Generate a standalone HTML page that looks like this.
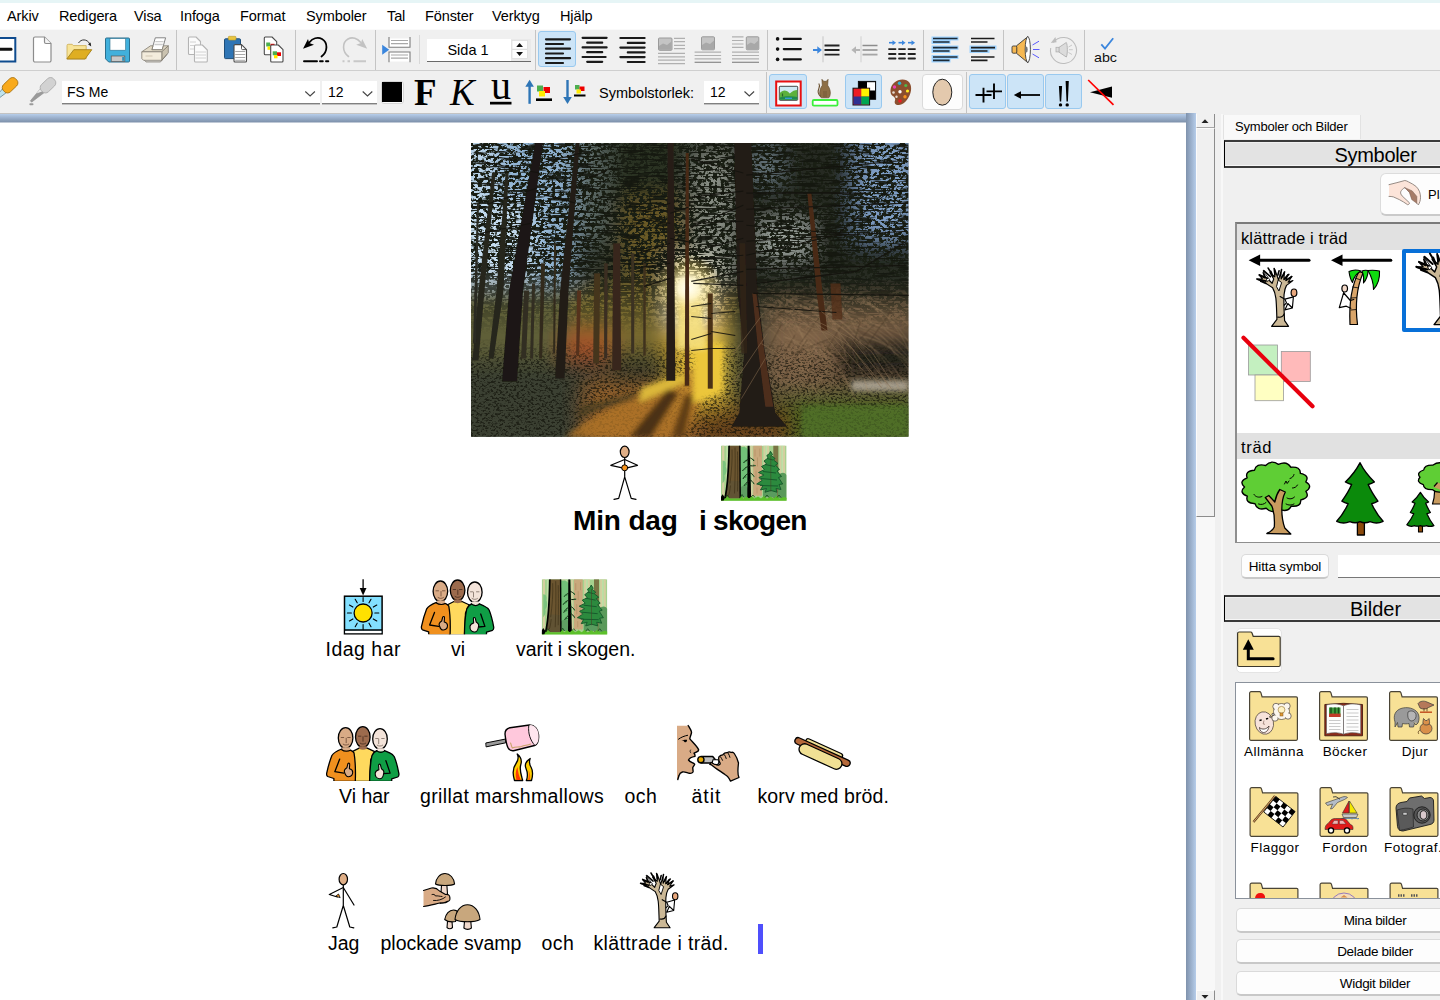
<!DOCTYPE html>
<html lang="sv">
<head>
<meta charset="utf-8">
<title>Min dag i skogen</title>
<style>
*{box-sizing:border-box;margin:0;padding:0}
html,body{width:1440px;height:1000px;overflow:hidden;background:#f0f0f0;font-family:"Liberation Sans",sans-serif;color:#000}
#app{position:relative;width:1440px;height:1000px;overflow:hidden;background:#f0f0f0}
.abs{position:absolute}
svg{position:absolute;overflow:visible}
/* menu */
#topstrip{left:0;top:0;width:1440px;height:3px;background:#e6f5f6}
#menubar{left:0;top:3px;width:1440px;height:26px;background:#fff}
.mi{position:absolute;top:5px;font-size:14.5px;line-height:16px;color:#000;white-space:nowrap;letter-spacing:-0.1px}
/* toolbars */
#tb1{left:0;top:29px;width:1440px;height:42px;background:#f0f0f0;border-top:1px solid #fafafa}
#tb2{left:0;top:70px;width:1440px;height:44px;background:#f0f0f0;border-top:1px solid #cfcfcf}
.sep{position:absolute;width:1px;background:#c4c4c4}
.sel{position:absolute;background:#cce4f7;border:1px solid #99c9ef;border-radius:3px}
.combo{position:absolute;background:#fff;border-bottom:1px solid #808080;box-shadow:0 1px 0 #c2c2c2;font-size:14px;line-height:22px;white-space:nowrap}
/* document */
#docwrap{left:0;top:113px;width:1196px;height:887px;background:#fff}
#doctop{left:0;top:113px;width:1196px;height:10px;background:linear-gradient(#c3c3c3 0,#c3c3c3 1px,#b6cdea 1px,#7f92ac 9px,#fff 10px)}
#docright{left:1186px;top:113px;width:10px;height:887px;background:linear-gradient(90deg,#7f92ac,#b6cdea)}
.w{position:absolute;white-space:nowrap;font-size:19.5px;line-height:22px;color:#000}
/* scrollbar */
#sb{left:1196px;top:114px;width:18px;height:886px;background:#f0f0f0}
/* panel */
#panel{left:1216px;top:114px;width:224px;height:886px;background:#f0f0f0}
.hdr{position:absolute;background:#e3e3e3;border-top:2px solid #3a3a3a;border-bottom:2px solid #3a3a3a;border-left:1px solid #000;box-shadow:inset 0 1px 0 #efefef,inset 0 -1px 0 #f6f6f6;font-size:20px;line-height:22px;text-align:center;letter-spacing:-0.3px}
.btn{position:absolute;background:#fdfdfd;border:1px solid #dadada;border-bottom:2px solid #c8c8c8;border-radius:5px;font-size:13.5px;letter-spacing:-0.3px;text-align:center;white-space:nowrap}
.lbl{position:absolute;font-size:13.5px;line-height:15px;white-space:nowrap;text-align:center;letter-spacing:0.45px}
</style>
</head>
<body>
<div id="app">
<div class="abs" id="topstrip"></div>
<div class="abs" id="menubar">
<span class="mi" style="left:7px">Arkiv</span>
<span class="mi" style="left:59px">Redigera</span>
<span class="mi" style="left:134px">Visa</span>
<span class="mi" style="left:180px">Infoga</span>
<span class="mi" style="left:240px">Format</span>
<span class="mi" style="left:306px">Symboler</span>
<span class="mi" style="left:387px">Tal</span>
<span class="mi" style="left:425px">Fönster</span>
<span class="mi" style="left:492px">Verktyg</span>
<span class="mi" style="left:560px">Hjälp</span>
</div>
<div class="abs" id="tb1"></div>
<div class="abs" id="tb2"></div>
<!--TB1-->
<div class="sep" style="left:176px;top:30px;height:40px"></div>
<div class="sep" style="left:295px;top:30px;height:40px"></div>
<div class="sep" style="left:375px;top:30px;height:40px"></div>
<div class="sep" style="left:419px;top:35px;height:29px;background:#d8d8d8"></div>
<div class="sep" style="left:535px;top:30px;height:40px"></div>
<div class="sep" style="left:767px;top:30px;height:40px"></div>
<div class="sep" style="left:923px;top:30px;height:40px"></div>
<div class="sep" style="left:1003px;top:30px;height:40px"></div>
<div class="sep" style="left:1084px;top:30px;height:40px"></div>
<div class="sel" style="left:538px;top:31px;width:38px;height:36px"></div>
<div class="abs" style="left:427px;top:39px;width:104px;height:23px;background:#e9e9e9;border-bottom:1px solid #6a6a6a"></div>
<div class="abs" style="left:427px;top:39px;width:84px;height:22px;background:#fff;font-size:14.5px;line-height:22px;text-align:center;padding-left:0px"><span id="sida" style="position:relative;left:-1px;top:0px">Sida 1</span></div>
<svg id="tb1svg" style="left:0;top:0" width="1440" height="72" viewBox="0 0 1440 72">
<!-- partial blue box -->
<rect x="-4" y="38" width="19.3" height="23.5" fill="#fff" stroke="#0f4c8f" stroke-width="2"/>
<rect x="-2" y="47.8" width="14.5" height="3" rx="1.4" fill="#111"/>
<!-- new doc -->
<path d="M35 37h9.5l6.500 6.500v17a1.500 1.500 0 0 1 -1.500 1.500h-14.500a1.500 1.500 0 0 1 -1.500 -1.500v-22a1.500 1.500 0 0 1 1.500 -1.500z" fill="#fff" stroke="#8c8c8c" stroke-width="1.200"/>
<path d="M44.500 37v5a1.500 1.500 0 0 0 1.500 1.500h5" fill="#f4f4f4" stroke="#8c8c8c" stroke-width="1.200"/>
<!-- open folder -->
<path d="M67 45.500a1.200 1.200 0 0 1 1.200 -1.200h4l1.200 1.300h12.800v13.200h-19.200z" fill="#f8e498" stroke="#c9ab52" stroke-width="0.800"/>
<path d="M66.800 59l7 -9.300h18l-6.800 9.300z" fill="#dfae21" stroke="#a5801a" stroke-width="0.900" stroke-linejoin="round"/>
<path d="M78.500 43c2.500 -4.200 8.500 -4.300 11.300 0.800" fill="none" stroke="#222" stroke-width="0.900"/>
<path d="M91.200 46.500l-3.200 -2.300l2.600 -1.700z" fill="#222"/>
<!-- save -->
<path d="M106.500 38h22a1 1 0 0 1 1 1v22a1 1 0 0 1 -1 1h-19.800l-3.200 -3.200v-19.800a1 1 0 0 1 1 -1z" fill="#41b0dc" stroke="#2b6f8e" stroke-width="1"/>
<rect x="110" y="38.600" width="15.600" height="11.600" fill="#fff" stroke="#2b6f8e" stroke-width="0.600"/>
<rect x="111.200" y="56" width="13.600" height="5.600" fill="#c8c8c8" stroke="#555" stroke-width="0.700"/>
<rect x="122.200" y="57" width="2" height="3.800" fill="#2f8fb8"/>
<!-- print -->
<path d="M151.800 49.800l3.500 -12h10.300l-3.400 12z" fill="#fff" stroke="#777" stroke-width="0.900" stroke-linejoin="round"/>
<path d="M154.500 44.500h8.300M155.300 41.700h8.300" stroke="#ccc" stroke-width="1.300"/>
<path d="M141.800 51.800l8.700 -6h2.500l-1.200 4h10.400l1.300 -4h4.800l-6.500 6z" fill="#e2dac7" stroke="#807b70" stroke-width="0.800" stroke-linejoin="round"/>
<path d="M161.800 51.800l6.500 -6v7l-6.500 7.500z" fill="#cbc3b0" stroke="#807b70" stroke-width="0.800" stroke-linejoin="round"/>
<path d="M141.800 51.800h20v8.500h-18.300l-1.700 -1.800z" fill="#f3ecdc" stroke="#807b70" stroke-width="0.800" stroke-linejoin="round"/>
<path d="M145.500 56h7" stroke="#ddd5c2" stroke-width="1.600"/>
<path d="M144.500 60.300l1.500 1.600h14.500l6.500 -7.600" fill="none" stroke="#807b70" stroke-width="0.900"/>
<!-- copy gray -->
<g fill="#fbfbfb" stroke="#b4b4b4" stroke-width="1.100" stroke-linejoin="round">
<path d="M189.500 37h6.500l4.500 4.500v13h-11a1 1 0 0 1 -1 -1v-15.500a1 1 0 0 1 1 -1z"/>
<path d="M195.500 45h6.800l5 5v11a1 1 0 0 1 -1 1h-10.800a1 1 0 0 1 -1 -1v-15a1 1 0 0 1 1 -1z"/>
</g>
<path d="M190 42h6M190 45.500h4M190 49h4M195.500 52h10.500M195.500 55h10.500M195.500 58h10.500" stroke="#d2d2d2" stroke-width="1"/>
<!-- paste -->
<rect x="224.500" y="38.800" width="16" height="19.800" rx="1" fill="#2f75b5" stroke="#1f4e79" stroke-width="1"/>
<rect x="228.300" y="36.300" width="7.700" height="3.800" rx="1" fill="#e8c440" stroke="#b89b2a" stroke-width="0.600"/>
<path d="M235 44.600h6.500l5 5v11.400a1 1 0 0 1 -1 1h-10.500a1 1 0 0 1 -1 -1v-15.400a1 1 0 0 1 1 -1z" fill="#fff" stroke="#4a4a4a" stroke-width="1.100" stroke-linejoin="round"/>
<path d="M241.500 44.600v4a1 1 0 0 0 1 1h4" fill="none" stroke="#4a4a4a" stroke-width="0.900"/>
<path d="M235.200 51.500h10M235.200 54.500h10M235.200 57.500h10M235.200 60.300h10" stroke="#aaa" stroke-width="1"/>
<!-- copy special -->
<g fill="#fff" stroke="#4a4a4a" stroke-width="1.100" stroke-linejoin="round">
<path d="M265.300 37h6.700l4.700 4.700v13h-11.400a1 1 0 0 1 -1 -1v-15.700a1 1 0 0 1 1 -1z"/>
</g>
<rect x="266.200" y="42.500" width="4" height="4" fill="#4caf50"/><rect x="270.500" y="43.800" width="4" height="3.500" fill="#e00"/><rect x="267.500" y="46.500" width="3" height="3.300" fill="#ffeb00"/>
<path d="M271.700 45h6.600l4.700 4.700v11.300a1 1 0 0 1 -1 1h-10.300a1 1 0 0 1 -1 -1v-15a1 1 0 0 1 1 -1z" fill="#fff" stroke="#4a4a4a" stroke-width="1.100" stroke-linejoin="round"/>
<rect x="272.700" y="51.300" width="4.300" height="4" fill="#4caf50"/><rect x="277" y="52.300" width="4" height="3.700" fill="#e00"/><rect x="274" y="55" width="3.500" height="3.300" fill="#ffeb00"/>
<!-- undo -->
<path d="M321.500 56.500c6.500 -5 6.500 -14 0.500 -17.500c-4.500 -2.600 -9.500 -0.500 -12.500 3.200" fill="none" stroke="#000" stroke-width="1.800" stroke-linecap="round"/>
<path d="M303 48.700l5 -9.700l1.200 4l4.800 1.800z" fill="#000"/>
<path d="M304 61.200h13M320 61.200h2.800M326 61.200h2.300" stroke="#000" stroke-width="1.900" stroke-linecap="round"/>
<!-- redo -->
<path d="M348.500 56.500c-6.500 -5 -6.500 -14 -0.500 -17.500c4.500 -2.600 9.500 -0.500 12.500 3.200" fill="none" stroke="#c2c2c2" stroke-width="1.600" stroke-linecap="round"/>
<path d="M367.200 48.700l-5 -9.700l-1.200 4l-4.800 1.800z" fill="#c2c2c2"/>
<path d="M366 61.200h-12.500M350 61.200h-2.500M344.500 61.200h-2" stroke="#c8c8c8" stroke-width="1.900"/>
<!-- insert para -->
<path d="M382.200 44.700l7 5l-7 5z" fill="#3b86dd"/>
<rect x="389" y="38.500" width="21" height="8.500" fill="#fff"/><rect x="389" y="52" width="21" height="9.500" fill="#fff"/>
<path d="M389 37v10.300h21v-10.300M389 62.300v-10.300h21v10.300" fill="none" stroke="#7d7d7d" stroke-width="1.100"/>
<path d="M391 40.500h17M391 43.700h17M391 55h17M391 58.200h17" stroke="#a8a8a8" stroke-width="1.200"/>
<!-- spinner -->
<rect x="512" y="40.500" width="15.500" height="8.600" fill="#fdfdfd" stroke="#d5d5d5" stroke-width="0.600"/>
<rect x="512" y="49.700" width="15.500" height="8.600" fill="#fdfdfd" stroke="#d5d5d5" stroke-width="0.600"/>
<path d="M516.200 47l3.400 -4l3.400 4zM516.200 52l3.400 4l3.400 -4z" fill="#111"/>
<!-- align left (pressed) -->
<g stroke="#1a1a1a" stroke-width="2.200" stroke-linecap="round">
<path d="M546 39.300h24M546 44h17M546 48.700h24M546 53.500h17M546 58.200h24M546 63h17"/>
<path d="M582.600 37.800h24M587.200 42.700h15M582.600 47.400h24M587.200 52.200h15M582.600 57h23M587.200 61.800h15"/>
<path d="M620.400 38h24.200M627.800 42.900h16.800M620.400 47.600h24.200M627.800 52.400h16.800M620.400 57.100h24.200M627.800 62h16.800"/>
</g>
<!-- image wrap icons (gray) -->
<g>
<rect x="658.500" y="38" width="13.500" height="12.300" rx="1" fill="#c4c4c4" stroke="#9a9a9a" stroke-width="1"/>
<path d="M659 46l4 -2.500l4 1.500l4.500 -3.500v8.300h-12.500z" fill="#a8a8a8"/>
<path d="M674 38.300h11M674 41.700h11M674 45.300h11M674 48.700h11" stroke="#b0b0b0" stroke-width="1.200"/>
<path d="M658 53.400h27M658 56.800h27M658 60.200h27M658 63.600h27" stroke="#b0b0b0" stroke-width="1.200"/>
<rect x="701.500" y="36.800" width="13" height="13" rx="1" fill="#c4c4c4" stroke="#9a9a9a" stroke-width="1"/>
<path d="M702 45l4 -2.500l4 1.500l4 -3.500v8.800h-12z" fill="#a8a8a8"/>
<path d="M694.600 52.200h26.500M694.600 55.500h26.500M694.600 58.900h26.500" stroke="#b0b0b0" stroke-width="1.200"/><path d="M694.600 62.300h26.500" stroke="#8a8a8a" stroke-width="1.200"/>
<rect x="746.300" y="36.800" width="12.500" height="13" rx="1" fill="#c4c4c4" stroke="#9a9a9a" stroke-width="1"/>
<path d="M746.800 45l4 -2.500l3.500 1.500l4 -3.500v8.800h-11.500z" fill="#a8a8a8"/>
<path d="M732 36.800h11.500M732 40.500h11.500M732 44h11.500M732 47.400h11.500" stroke="#b0b0b0" stroke-width="1.200"/>
<path d="M732 52.200h27M732 55.500h27M732 58.900h27" stroke="#b0b0b0" stroke-width="1.200"/><path d="M732 62.300h27" stroke="#8a8a8a" stroke-width="1.200"/>
</g>
<!-- bullets -->
<circle cx="777.600" cy="38.900" r="1.800" fill="#111"/><circle cx="777.600" cy="49.100" r="1.800" fill="#111"/><circle cx="777.600" cy="59.400" r="1.800" fill="#111"/>
<path d="M783.800 38.900h17M783.800 49.100h17M783.800 59.400h17" stroke="#111" stroke-width="2.200" stroke-linecap="round"/>
<!-- indent -->
<path d="M823 36.300v26" stroke="#c6c6c6" stroke-width="1"/>
<path d="M813 50h6" stroke="#3b86dd" stroke-width="2"/><path d="M817.300 46.300l4.600 3.700l-4.600 3.700z" fill="#3b86dd"/>
<path d="M824.500 45.500h15M824.500 50h15M824.500 54.600h15" stroke="#222" stroke-width="1.800"/>
<!-- outdent -->
<path d="M861 36.300v26" stroke="#d0d0d0" stroke-width="1"/>
<path d="M854 50h6" stroke="#b5b5b5" stroke-width="2"/><path d="M856 46.300l-4.600 3.700l4.600 3.700z" fill="#b5b5b5"/>
<path d="M862.500 45.500h15M862.500 50h15" stroke="#8c8c8c" stroke-width="1.500"/><path d="M862.500 54.600h15" stroke="#a5a5a5" stroke-width="1.800"/>
<!-- tabs -->
<g fill="#3b86dd" stroke="#3b86dd">
<path d="M889 42.700h4" stroke-width="1.600"/><path d="M892.500 40.200l3.600 2.500l-3.600 2.500z" stroke="none"/>
<path d="M898.500 42.700h4" stroke-width="1.600"/><path d="M902 40.200l3.600 2.500l-3.600 2.500z" stroke="none"/>
<path d="M908 42.700h4" stroke-width="1.600"/><path d="M911.500 40.200l3.600 2.500l-3.600 2.500z" stroke="none"/>
</g>
<path d="M889 49.100h6.500M899 49.100h6M908.500 49.100h6.500M889 54h6.500M899 54h6M908.500 54h6.500M889 58.500h6.500M899 58.500h6M908.500 58.500h6.500" stroke="#222" stroke-width="1.800" stroke-linecap="round"/>
<!-- para highlight 1 -->
<g stroke="#9fd3ff" stroke-width="4.200"><path d="M931.500 38.500h27M931.500 42h19M931.500 47.600h27M931.500 51h19M931.500 57h27M931.500 60.400h19"/></g>
<g stroke="#1c2a36" stroke-width="1.700"><path d="M933 38.500h24.500M933 42h16.500M933 47.600h24.500M933 51h16.500M933 57h24.500M933 60.400h16.500"/></g>
<g stroke="#9fd3ff" stroke-width="4.200"><path d="M969.500 47.600h27M969.500 51h20"/></g>
<g stroke="#1c1c1c" stroke-width="1.700"><path d="M971 38.500h23.500M971 42h16.500M971 47.600h24M971 51h16.500M971 57h23.500M971 60.400h16.500"/></g>
<!-- speaker -->
<path d="M1016.500 45.800l11.500 -9.300v26.300l-11.500 -9.500z" fill="#f6b852" stroke="#3a3a3a" stroke-width="0.900" stroke-linejoin="round"/>
<rect x="1012" y="46" width="4.800" height="7.200" rx="1.200" fill="#f6b852" stroke="#3a3a3a" stroke-width="0.900"/>
<ellipse cx="1027.800" cy="49.500" rx="2.600" ry="12.800" fill="#fff" stroke="#3a3a3a" stroke-width="0.900"/>
<ellipse cx="1026.300" cy="49.500" rx="1.400" ry="3" fill="#777"/>
<path d="M1032.500 45l6.500 -3.800M1033 49.500h6.500M1032.500 54l6.500 3.800" stroke="#4a4aff" stroke-width="0.900"/>
<!-- speaker gray -->
<path d="M1053.200 42.500a13 13 0 1 1 -2.500 5.500" fill="none" stroke="#bdbdbd" stroke-width="1.100"/>
<path d="M1050.800 43l4.600 -6l1.200 5.200z" fill="#bdbdbd"/>
<path d="M1058.800 47.500l7.500 -5c1.400 2.500 1.400 12 0 14.500l-7.500 -5z" fill="#dcdcdc" stroke="#b0b0b0" stroke-width="0.900"/>
<rect x="1056" y="47.300" width="3" height="4.600" fill="#dcdcdc" stroke="#b0b0b0" stroke-width="0.800"/>
<path d="M1068.500 47l3.500 -2M1069 49.700h3.800M1068.500 52.500l3.500 2" stroke="#c4c4c4" stroke-width="0.900"/>
<!-- spell check -->
<path d="M1101.300 44.300l3.700 4.200l8.200 -10.300" fill="none" stroke="#3b86dd" stroke-width="1.800"/>
<text x="1094" y="62.200" font-family="Liberation Sans, sans-serif" font-size="13.500" fill="#111" textLength="23" lengthAdjust="spacingAndGlyphs">abc</text>
</svg>
<!--/TB1-->
<!--TB2-->
<div class="sep" style="left:766px;top:72px;height:41px"></div>
<div class="sep" style="left:966px;top:72px;height:41px"></div>
<div class="sel" style="left:769px;top:74px;width:38px;height:35px"></div>
<div class="sel" style="left:845px;top:74px;width:37px;height:35px"></div>
<div class="sel" style="left:969px;top:74px;width:37px;height:35px"></div>
<div class="sel" style="left:1007px;top:74px;width:37px;height:35px"></div>
<div class="sel" style="left:1045px;top:74px;width:37px;height:35px"></div>
<div class="abs" style="left:922px;top:74px;width:41px;height:36px;background:#fdfdfd;border:1px solid #dadada;border-radius:4px"></div>
<div class="abs" style="left:381px;top:81px;width:23px;height:23px;background:#fbfbfb;border:1px solid #d6d6d6;border-radius:3px"></div>
<div class="abs" style="left:382px;top:82px;width:20px;height:20px;background:#000"></div>
<div class="combo" style="left:62px;top:81px;width:258px;height:23px;padding-left:5px"><span id="fsme">FS Me</span></div>
<div class="combo" style="left:322px;top:81px;width:55px;height:23px;padding-left:6px"><span class="n12">12</span></div>
<div class="combo" style="left:704px;top:81px;width:55px;height:23px;padding-left:6px"><span class="n12">12</span></div>
<div class="abs" id="symst" style="left:599px;top:82px;font-size:14.5px;line-height:22px;white-space:nowrap">Symbolstorlek:</div>
<div class="abs" id="bF" style="left:414px;top:72.5px;font-family:'Liberation Serif',serif;font-weight:bold;font-size:37px;line-height:40px">F</div>
<div class="abs" id="iK" style="left:450px;top:72.5px;font-family:'Liberation Serif',serif;font-style:italic;font-size:37px;line-height:40px">K</div>
<div class="abs" id="uU" style="left:491px;top:64px;font-family:'Liberation Serif',serif;font-size:40px;line-height:44px">u</div>
<svg id="tb2svg" style="left:0;top:0" width="1440" height="114" viewBox="0 0 1440 114">
<!-- dropper orange (partial) -->
<g transform="translate(-6.900 101.500) rotate(-43.700)">
<path d="M0 -0.900l15.500 -1.800v5.400l-15.500 -1.800z" fill="#bfe3ee" stroke="#5d7f8a" stroke-width="0.700"/>
<rect x="15" y="-5" width="17" height="10" rx="4.300" fill="#f9aa1c" stroke="#a36d0c" stroke-width="0.800"/>
</g>
<!-- dropper gray -->
<g transform="translate(31 101.500) rotate(-43.700)">
<path d="M0 -0.900l15.500 -1.800v5.400l-15.500 -1.800z" fill="#9a9a9a" stroke="#8e8e8e" stroke-width="0.500"/>
<path d="M9.500 -2l6 -0.700v3.200z" fill="#ececec"/>
<rect x="15" y="-5" width="17" height="10" rx="4.300" fill="#d2d2d2" stroke="#a8a8a8" stroke-width="0.800"/>
</g>
<rect x="29.300" y="103.300" width="4.200" height="2" rx="1" fill="#9a9a9a"/>
<!-- chevrons -->
<g fill="none" stroke="#444" stroke-width="1.100">
<path d="M305.300 91.500l4.800 4.500l4.800 -4.500"/>
<path d="M362.700 91.500l4.800 4.500l4.800 -4.500"/>
<path d="M744.500 91.500l4.800 4.500l4.800 -4.500"/>
</g>
<!-- underline bar for U -->
<rect x="490" y="101.800" width="21.500" height="2.700" fill="#000"/>
<!-- up arrow + colors -->
<path d="M529.600 103.800v-20" stroke="#2e75b6" stroke-width="2.400"/><path d="M525.300 86.800l4.300 -7l4.300 7z" fill="#2e75b6"/>
<rect x="537" y="85.500" width="6" height="6" fill="#4caf50"/><rect x="543.500" y="87" width="6.500" height="6" fill="#e00"/><rect x="539" y="91" width="6" height="5.500" fill="#ffeb00"/>
<rect x="536" y="98.400" width="16" height="2.600" fill="#000"/>
<!-- down arrow + colors -->
<path d="M567.500 80v20" stroke="#2e75b6" stroke-width="2.400"/><path d="M563.200 97l4.300 7l4.300 -7z" fill="#2e75b6"/>
<rect x="575" y="85" width="4.500" height="4.500" fill="#4caf50"/><rect x="579.500" y="86.500" width="5" height="4.500" fill="#e00"/><rect x="576.500" y="89.500" width="4.500" height="4" fill="#ffeb00"/>
<rect x="574" y="94.500" width="11.500" height="2" fill="#000"/>
<!-- red frame picture -->
<rect x="776.200" y="81.500" width="24.500" height="24" fill="#fff" stroke="#e81010" stroke-width="2"/>
<rect x="779.300" y="86.300" width="18.400" height="14" rx="0.800" fill="#cfeaf4" stroke="#333" stroke-width="0.900"/>
<path d="M779.800 93c3 -3.500 7 -3.500 10 0.500c2.500 -2.500 5 -3.500 7.500 -3.500v9.800h-17.500z" fill="#5cb13c"/>
<path d="M779.800 97.500c5 -1.500 12 -1.500 17.500 -0.500v2.800h-17.500z" fill="#1f8a4f"/>
<path d="M785 98.300h7" stroke="#3b9fe0" stroke-width="1.300"/>
<path d="M782.500 93.500v3" stroke="#27632a" stroke-width="1.200"/>
<!-- cat -->
<path d="M822.300 85.300l-0.400 -6l1.800 2h2.600l1.800 -2l-0.400 6c2.200 3 3.300 7 2.300 10.300c-0.300 1.200 -0.800 1.800 -1.300 2.200h-7.400c-0.500 -0.400 -1 -1 -1.300 -2.200c-1 -3.300 0.100 -7.300 2.300 -10.300z" fill="#8d6e45" stroke="#5e4728" stroke-width="0.600"/>
<path d="M820.800 96.500c-2.600 -1.800 -3 -5.500 -1.800 -8.500c0.700 -1.800 0.700 -3.200 -0.200 -4.500" fill="none" stroke="#6b5030" stroke-width="1.100"/>
<path d="M824 91v6.500M826 91v6.500" stroke="#5e4728" stroke-width="0.500"/>
<rect x="812.700" y="100" width="24.800" height="5.600" rx="1.200" fill="#fff" stroke="#3cf03c" stroke-width="1.800"/>
<!-- colour squares -->
<rect x="858.300" y="81.300" width="17.400" height="18" fill="#000" stroke="#000" stroke-width="0.800"/>
<rect x="867" y="82.200" width="8" height="8.300" fill="#fff"/>
<rect x="853" y="88.200" width="16.600" height="16.800" fill="#ec1c24" stroke="#111" stroke-width="1"/>
<rect x="861.300" y="88.700" width="7.800" height="7.800" fill="#fff200"/>
<rect x="853.500" y="96.500" width="7.800" height="8" fill="#2e3192"/>
<rect x="861.300" y="96.500" width="7.800" height="8" fill="#00a651"/>
<!-- palette -->
<path d="M890.500 90c0.500 -6 6 -10.500 12 -10.500c6 0 9.500 4.500 8.500 11c-1 6.500 -6 14 -12 14.500c-3.500 0.300 -5 -2 -4 -4.500c0.800 -2 -0.500 -3.500 -2.300 -4.500c-1.700 -1 -2.400 -3 -2.200 -6z" fill="#8b4f2e"/>
<circle cx="899.500" cy="83.300" r="1.700" fill="#29b6d8"/><circle cx="894.500" cy="87" r="1.700" fill="#ec3fb3"/><circle cx="905.800" cy="85.500" r="1.600" fill="#4fb848"/><circle cx="907.500" cy="91" r="1.600" fill="#ffe91a"/><circle cx="905" cy="96.700" r="1.700" fill="#f7941d"/><circle cx="900" cy="101" r="1.800" fill="#ed1c24"/><circle cx="900" cy="91.800" r="1.700" fill="#fff"/><circle cx="893.500" cy="92.500" r="1.300" fill="#e8dcd0"/><circle cx="896.500" cy="96.800" r="1.200" fill="#e8dcd0"/>
<!-- skin oval -->
<ellipse cx="942.300" cy="92.200" rx="9.500" ry="13" fill="#e3c9ad" stroke="#222" stroke-width="1"/>
<!-- ++ -->
<path d="M975.500 95h16M983.500 87.800v14.600M986.500 91.400h15.500M994 83.400v15.500" stroke="#000" stroke-width="1.900"/>
<!-- arrow left -->
<path d="M1018 95h22" stroke="#000" stroke-width="1.800"/><path d="M1013.800 95l7.200 -3.700v7.400z" fill="#000"/>
<!-- !! -->
<path d="M1058.900 86h3.200l-0.900 15.500h-1.400zM1065.600 81h3.200l-0.900 20.500h-1.400z" fill="#000"/>
<circle cx="1060.500" cy="104.900" r="1.700" fill="#000"/><circle cx="1067.200" cy="104.900" r="1.700" fill="#000"/>
<!-- flag with slash -->
<path d="M1090 92.300l22 -5.700v11.200z" fill="#000"/>
<path d="M1088.200 80l25.300 24.800" stroke="#f00" stroke-width="1.700"/>
</svg>
<!--/TB2-->
<div class="abs" id="docwrap"></div>
<div class="abs" id="doctop"></div>
<div class="abs" id="docright"></div>
<!--DOC-->
<div class="abs" id="title1" style="left:573px;top:505px;font-size:28px;font-weight:bold;line-height:32px;white-space:nowrap;letter-spacing:-0.15px">Min dag</div>
<div class="abs" id="title2" style="left:699px;top:505px;font-size:28px;font-weight:bold;line-height:32px;white-space:nowrap;letter-spacing:-0.75px">i skogen</div>
<span class="w" id="w1" style="left:325.500px;top:638px;letter-spacing:0.5px">Idag har</span>
<span class="w" id="w2" style="left:451px;top:638px">vi</span>
<span class="w" id="w3" style="left:516px;top:638px;letter-spacing:-0.07px">varit i skogen.</span>
<span class="w" id="w4" style="left:339px;top:785px">Vi har</span>
<span class="w" id="w5" style="left:420px;top:785px;letter-spacing:0.37px">grillat marshmallows</span>
<span class="w" id="w6" style="left:624.500px;top:785px;letter-spacing:0.5px">och</span>
<span class="w" id="w7" style="left:691.500px;top:785px;letter-spacing:1px">ätit</span>
<span class="w" id="w8" style="left:757.500px;top:785px;letter-spacing:0.1px">korv med bröd.</span>
<span class="w" id="w9" style="left:328px;top:932px">Jag</span>
<span class="w" id="w10" style="left:380.500px;top:932px">plockade svamp</span>
<span class="w" id="w11" style="left:541.500px;top:932px;letter-spacing:0.5px">och</span>
<span class="w" id="w12" style="left:593.500px;top:932px;letter-spacing:0.37px">klättrade i träd.</span>
<div class="abs" id="caret" style="left:758px;top:924px;width:4.500px;height:30px;background:#4f4ffc"></div>
<!--/DOC-->
<!--DOCSVG-->
<svg id="docsvg" style="left:0;top:0" width="1196" height="1000" viewBox="0 0 1196 1000">
<defs>
<g id="forestsym">
<clipPath id="fsc"><rect x="0" y="0" width="65.600" height="55.200"/></clipPath>
<g clip-path="url(#fsc)">
<rect x="0" y="0" width="65.600" height="55.200" fill="#a5d18e"/>
<path d="M2.200 0v55M22 0v55M30.500 0v55M43.500 0v55M47 0v55M59.500 0v55M63 0v55" stroke="#d3cf9f" stroke-width="2.200"/>
<path d="M6 0v55M24.500 0v55M45.200 0v55M61.200 0v55" stroke="#bfe0a8" stroke-width="1.600"/>
<path d="M19.500 2c4 -2 8 1 8.500 6c2 5 1 12 2 18c1 7 0 14 -1 22l-10 4z" fill="#72c078"/>
<path d="M1.500 15c3 0 4 3 3 6c2 3 1 7 -1 9c1 3 0 6 -2 8z" fill="#7cc47f"/>
<path d="M19 42c4 -3 7 -2 9 1v9h-9z" fill="#5f9f63"/>
<rect x="32.200" y="0" width="8.800" height="50" fill="#c9a87c"/>
<path d="M32.200 49l1.500 2l1.500 -2.500l1.500 2.500l1.500 -2l1.500 2l1.300 -2.500v-2h-8.800z" fill="#c9a87c"/>
<path d="M34 4v7M36.500 12v9M38.800 3v8M35 25v10M38.500 28v12M36 42v6" stroke="#ae8c60" stroke-width="0.600"/>
<rect x="52.300" y="0" width="5" height="53" fill="#7a7444"/>
<path d="M57.500 30c3 -4 7 -3 8.100 0v23h-9z" fill="#5a9a5a"/>
<path d="M42 40h14v12h-14z" fill="#5a9c5f"/>
<path d="M8.100 0h10.800l0.300 53h-15.300c2.800 -12 3.800 -31 4.200 -53z" fill="#6b5530"/>
<path d="M6 36c3 -1 8 -1 13.200 0v17h-15.300z" fill="#5c5236" opacity="0.700"/>
<path d="M11 4c0.500 10 -0.500 22 -2 34M14 2c0.400 14 0.200 30 -0.500 46M16.500 6c0.200 10 0.300 26 0 40M9.500 40c-0.500 4 -1 8 -2 10" fill="none" stroke="#3f3218" stroke-width="0.700"/>
<path d="M8.100 0c-0.400 22 -1.400 41 -4.200 53" fill="none" stroke="#000" stroke-width="1.700"/>
<path d="M18.900 0l0.300 53" fill="none" stroke="#000" stroke-width="1.400"/>
<path d="M26.600 0h2l1.600 53h-3.900z" fill="#000"/>
<path d="M27.500 14c-2 0.500 -3.500 1.500 -5 3.500M27.500 21c-2.500 0.500 -4.500 2 -6 4.500M27.500 28c-2.500 1 -4.500 3 -5.500 5.500M27.500 36c-2 1 -3.500 2.500 -4.500 4.500M28 12c2 0.500 3.500 1.500 5 3.500M28 20c2.500 0.500 4.500 0.500 6.500 0M28.500 27c2 1 3.500 2 4.500 4M28.500 34c2 1 3.500 2.500 4.500 4.500" fill="none" stroke="#10210f" stroke-width="1"/>
<path d="M22 17l2 -2l2 1zM21 25l2.500 -2.500l2 1zM22 33l2 -2.500l2 1zM23 40.500l2 -2.500l1.500 1.500zM31 13l2 1l0.500 2zM31.500 19l2.500 0.500l0.500 1.500zM31 29l2 1l0.500 2zM31.500 36.500l1.500 1l0.500 2z" fill="#2f7a3a"/>
<path d="M49.5 5.8L51.5 9.0L50.5 10.0L54.0 13.0L52.5 14.5L57.0 18.0L54.5 19.5L58.5 24.0L56.0 25.5L60.5 31.0L57.5 32.0L61.7 38.5L58.0 39.0L60.0 44.0L55.0 43.0L56.0 46.7L50.0 45.0L44.0 46.7L45.5 43.0L39.5 44.5L42.0 40.0L35.7 38.5L41.0 35.0L38.0 32.0L43.0 29.5L37.5 27.0L43.5 24.0L40.5 21.0L45.5 18.5L43.0 15.5L47.0 12.5L45.8 10.0L48.5 8.0z" fill="#2c8a3e" stroke="#15562a" stroke-width="0.900" stroke-linejoin="round"/>
<path d="M46 13l6 1.500M44 19l10 2M42 26l13 1.500M40 33l16 1.500M39 40l18 0.500" stroke="#15562a" stroke-width="0.900" fill="none"/>
<path d="M49.800 10v36" stroke="#4a3a22" stroke-width="0.800" opacity="0.600"/>
<path d="M0 53c2 -2.500 3 -1 4.500 0l2 -2.500l2 2.500h10l2 -3l2 3l3 -2l2.500 2l3 -2.500l2.500 2.500l3.500 -2l3 2l3 -2.500l3 2.500l3.500 -2l3 2l3 -2.500l3 2.500l4.500 -1.500l3 1V56H0z" fill="#5cc02b"/>
<path d="M0 55.200v-4l1.500 -2.500l2.500 3.500l-1.500 3z" fill="#000"/>
<path d="M4 52l2 -2.500l2 2.500M19.500 52l1.500 -3l2 3M30 51.500l2 -2l2 2.500M44 52l2 -2.500l2 2.500M56 52l2 -2.500l2 2.500" fill="none" stroke="#0f3d12" stroke-width="0.700"/>
</g>
</g>
<clipPath id="ppc"><rect x="0" y="0" width="90" height="59.300"/></clipPath><g id="peoplesym" stroke-linejoin="round" stroke-linecap="round" clip-path="url(#ppc)">
<!-- yellow middle -->
<path d="M32 30l7 -3.500h8l7.500 3.500l-4 8l-1 21.800h-15z" fill="#ffd95e" stroke="#000" stroke-width="1.300"/>
<ellipse cx="42.600" cy="15.300" rx="7.300" ry="10.300" fill="#9c6b4d" stroke="#000" stroke-width="1.300"/>
<path d="M39 27c2 1.500 5.500 1.500 7.500 0l0 -2.500l-7.500 0z" fill="#9c6b4d"/>
<path d="M38.200 14.500h2.500M44.500 14.500h2.500M42.800 15v4.500M40 21.500c1.500 1.200 4 1.200 5.500 0" stroke="#3a2418" stroke-width="0.700" fill="none"/>
<!-- orange left -->
<path d="M21.500 27.300c-4 1.500 -8 3.500 -9.800 6.500c-2 5 -4 12 -5.200 17.600c-0.300 1.800 0 2.800 1 3.400l6.200 2v3h21.400c0.300 -8 0.200 -20 -1.300 -28.600c-1 -1.500 -2 -2 -3.200 -2.600z" fill="#f0901e" stroke="#000" stroke-width="1.300"/>
<ellipse cx="25.400" cy="16.300" rx="7.300" ry="10.300" fill="#d9ab86" stroke="#000" stroke-width="1.300"/>
<path d="M21.800 27.500c2 1.800 6 1.800 8.300 0.500l-0.300 -2.500h-7.600z" fill="#d9ab86"/>
<path d="M21.500 28c2.500 2 6.500 2 9 0.400" fill="none" stroke="#000" stroke-width="1.100"/>
<path d="M21 15.800h2.500M27.500 15.800h2.500M26 16.500v4.500M23 22.500c1.500 1.200 4 1.200 5.500 0" stroke="#5a3a28" stroke-width="0.700" fill="none"/>
<path d="M19.500 37.400l-4.900 12.600l9 1.400" fill="none" stroke="#000" stroke-width="1.300"/>
<path d="M24.500 51c-1 -2 0.500 -4 2.200 -5l1 -4c0.800 -1 2 -0.500 1.800 1l-0.300 4c2 0.500 3.300 1.500 3.300 3.500c0 2.500 -1.500 4.300 -4 4.500c-2 0.200 -3.300 -1.500 -4 -4z" fill="#d9ab86" stroke="#000" stroke-width="1.100"/>
<!-- green right -->
<path d="M57.200 28.600c-2.500 1 -4.500 2.800 -5.500 5.500c-1.500 7 -2.200 17 -2.300 25.700h22.100v-2.600l6 -1.900c1 -0.600 1.400 -1.600 1.200 -3.300c-1 -5.500 -2.500 -12 -4.600 -17c-1.500 -2.600 -4 -3.500 -5.800 -4.400l-4.600 -2z" fill="#0f9e45" stroke="#000" stroke-width="1.300"/>
<ellipse cx="59.800" cy="17.200" rx="7.300" ry="10.200" fill="#f3e3d9" stroke="#000" stroke-width="1.300"/>
<path d="M56.800 28.500c2 1.800 5 1.800 7 0.500l-0.300 -2.500h-6.400z" fill="#f3e3d9"/>
<path d="M56.500 29c2.500 2 5.500 2 7.700 0.400" fill="none" stroke="#000" stroke-width="1.100"/>
<path d="M55.500 16.800h2.500M61.500 16.800h2.500M58.500 17.500v4.500M57 23.500c1.500 1.200 4 1.200 5.500 0" stroke="#6a5a50" stroke-width="0.700" fill="none"/>
<path d="M65.700 39l4.200 12.400l-6.200 0.600" fill="none" stroke="#000" stroke-width="1.300"/>
<path d="M63.400 52c0.800 -2 -0.500 -4 -2.200 -5l-1 -4c-0.800 -1 -2 -0.500 -1.800 1l0.300 4c-2 0.500 -3.500 1.500 -3.700 3.500c-0.200 3 1.700 5.300 4.200 5.500c2.500 0.200 3.800 -2 4.200 -5z" fill="#f3e3d9" stroke="#000" stroke-width="1.100"/>
</g>
</defs>
<!-- title stick figure -->
<g fill="none" stroke="#000" stroke-width="1.200" stroke-linecap="round" stroke-linejoin="round">
<path d="M624.700 457.500v19.300l-6 21.500l-4.700 1M624.700 476.800l6.500 21.500l4.800 1"/>
<path d="M624.700 459.500l-13.900 5.800l11.500 2.500M624.700 459.500l12.800 5.800l-10.500 2.500"/>
<ellipse cx="624.700" cy="451.800" rx="4.400" ry="5.700" fill="#dfae86"/>
<circle cx="624.700" cy="467.800" r="3" fill="#f7941d" stroke-width="1"/>
</g>
<use href="#forestsym" x="721" y="445.500"/>
<!-- row1: sun -->
<rect x="344.500" y="596.200" width="37.600" height="37.600" fill="#83e0ff" stroke="#000" stroke-width="1.500"/>
<rect x="345.200" y="630.600" width="36.200" height="2.600" fill="#fff"/>
<path d="M344.500 630h37.600" stroke="#000" stroke-width="1.400"/>
<g stroke="#000" stroke-width="1.100" stroke-linecap="round">
<path d="M363.100 597.500v4M363.100 624.600v5M374.800 613h4M347.400 613h4M369 602.800l2 -3.500M357.200 602.800l-2 -3.500M369 623.200l2 3.500M357.200 623.200l-2 3.500M373.300 607.100l3.500 -2M352.900 607.100l-3.500 -2M373.300 618.900l3.500 2M352.900 618.900l-3.500 2"/>
</g>
<circle cx="363.100" cy="613" r="9" fill="#ffe100" stroke="#000" stroke-width="1.300"/>
<path d="M363.100 579.200v10" stroke="#000" stroke-width="1.300"/><path d="M359.700 588l3.400 7.500l3.400 -7.500z" fill="#000"/>
<use href="#peoplesym" x="415" y="575"/>
<use href="#forestsym" x="541.700" y="579.200"/>
<!-- row2 -->
<use href="#peoplesym" x="320.200" y="721.700"/>
<!-- marshmallow -->
<g transform="translate(480 720)" stroke-linejoin="round" stroke-linecap="round">
<path d="M6.200 22.900l19.500 -3.900v3.800l-19.200 4z" fill="#9a9a9a" stroke="#000" stroke-width="1"/>
<path d="M25 14c0 -3.500 2 -5.500 5 -6.200l19.500 -2.800c5 0 8.500 4 9 9.500c0.500 5.500 -0.500 9.500 -4 11l-21 5.200c-2.500 0.300 -4.500 -1 -5.500 -3c-1.500 -3 -2.500 -9 -3 -13.700z" fill="#ffc8dc" stroke="#000" stroke-width="1.400"/>
<path d="M48.500 6c-0.500 7 1.500 14 6 19.300c4 -2 4.500 -6 4 -11c-0.500 -5 -3.500 -8.800 -8 -9.300z" fill="#ffe6ef"/>
<path d="M48.700 6.300c-0.700 7 1.500 14 6 19" fill="none" stroke="#000" stroke-width="0.900"/>
<path d="M30.500 23c1 2 1 4 2 5c3 -1.500 6 -0.500 9 -1.500c3 -1.500 6 -1 9 -2.500" fill="none" stroke="#c9a46a" stroke-width="1.100"/>
<path d="M34.500 60.500c-2.500 -8 -1.500 -13 1.500 -17c2.500 -3.500 3 -6 1.200 -9.500c4 3 4.800 7 3.500 11c-1.500 5 0.500 10 2 15.500z" fill="#ffcf00" stroke="#000" stroke-width="1.300"/>
<path d="M36.500 60c-1.500 -6 -0.500 -10 1 -13c0.500 5 1.500 9 3.500 13z" fill="#ff3b00"/>
<path d="M46.300 60.500c2 -5 1 -9 -0.300 -12c-1.500 -3.500 -0.500 -7 4.200 -10c-1.500 3.500 -0.800 6 1 9c2.300 4 1.500 8.500 0.300 13z" fill="#ffcf00" stroke="#000" stroke-width="1.300"/>
<path d="M47.800 60c1.200 -4 1.300 -7 0.600 -10c1.800 3 2.300 6 1.600 10z" fill="#ff6a00"/>
</g>
<!-- eating face -->
<g transform="translate(670 720)" stroke-linejoin="round" stroke-linecap="round">
<path d="M7 5.800h11.200c1.500 2.500 3 4.500 3.300 6.200c0.200 2 -1.500 4 -1.700 6.900c3 3.500 7 7 8.800 10.700c0 1.500 -1.200 2.300 -2.600 2.600c-0.800 0.300 -1.700 0.600 -2 1c0.700 1 1.200 2.200 1 3.200c-2.500 0.500 -5.500 1.200 -6.500 3.600c1.500 2.200 4.500 2.700 6.200 4.200c-0.300 1.500 -1.700 2.200 -1.900 3.300c-0.200 1.500 0.500 3 0.200 4.500c-0.800 1.300 -2 1.500 -3.500 1.300c-2.500 -0.500 -5 -1.800 -7.100 -1.300c-2 0.600 -3 2 -3.300 3.300l-1.300 4.200h-0.800z" fill="#d9ab86"/>
<path d="M18.200 5.500c1.500 2.500 3 4.800 3.300 6.500c0.200 2 -1.500 4 -1.700 6.900c3 3.500 7 7 8.800 10.700c0 1.500 -1.200 2.300 -2.600 2.600c-0.800 0.300 -1.700 0.600 -2 1c0.700 1 1.200 2.200 1 3.200c-2.500 0.500 -5.500 1.200 -6.500 3.600c1.500 2.200 4.500 2.700 6.200 4.200c-0.300 1.500 -1.700 2.200 -1.900 3.300c-0.200 1.500 0.500 3 0.200 4.500c-0.800 1.300 -2 1.500 -3.500 1.300c-2.500 -0.500 -5 -1.800 -7.100 -1.300c-2 0.600 -3 2 -3.300 3.300l-1.300 4.200" fill="none" stroke="#000" stroke-width="1.400"/>
<path d="M8.500 19.200c2.500 -2 6 -3.300 9.100 -3.900" fill="none" stroke="#000" stroke-width="1"/>
<path d="M11.500 21c1.500 -1 3.500 -1.500 5.500 -1.300c0.300 1.200 -0.300 2.200 -1.500 2.500c-1 0 -1.600 -0.600 -2 -1.500z" fill="#000"/>
<path d="M20.500 30c-0.700 1 -0.500 2 0.200 2.800" fill="none" stroke="#000" stroke-width="0.800"/>
<!-- food -->
<path d="M30.900 36.500h11.800l2.700 3.200l-2.700 3.200h-11.800z" fill="#bdbdbd" stroke="#000" stroke-width="1.500"/>
<circle cx="30.900" cy="39.700" r="3.100" fill="#e6a800" stroke="#000" stroke-width="1.400"/>
<!-- hand -->
<path d="M41.600 44.900l-1.800 -0.500l1.300 -2l5 2c2 1.300 4.500 0.500 4 -1.300c-1.500 -2.500 -2 -4.500 -1 -6.500c1 -1.200 2.500 -1.800 3.700 -1.800c1.300 -1.500 3 -2.300 4.300 -2c1.500 -1 3 -1 4 -0.300c1.200 -0.500 2.500 0 3.200 1c2 3 3.500 6 4.200 9.500c-0.500 5 -1.500 10.500 0.500 14.500l-8.500 3.600c-1.500 -3 -3 -5.500 -5.500 -6.500c-4 -3 -9 -6 -13.400 -9.700z" fill="#d9ab86" stroke="#000" stroke-width="1.300"/>
<path d="M50.500 36.800c0.800 1.200 1.500 2.300 2 3.500M54.500 34.800c0.800 1.300 1.300 2.500 1.700 3.700M58.300 33.500c0.800 1.300 1.300 2.500 1.600 3.800" fill="none" stroke="#000" stroke-width="1"/>
<path d="M43 39.700h5c1 1.500 1 3.500 -0.300 4.800c-2 0.500 -4 -0.300 -5.500 -1.700z" fill="#fff" stroke="#000" stroke-width="1.100"/>
</g>
<!-- hot dog -->
<g transform="translate(820.900 755.600) rotate(24.500)">
<rect x="-20" y="-10.300" width="40" height="5" rx="2.500" fill="#f0e094" stroke="#000" stroke-width="1.300"/>
<rect x="-30" y="-7.200" width="60" height="6.600" rx="3.300" fill="#b5693a" stroke="#000" stroke-width="1.300"/>
<rect x="-23" y="-4.500" width="46" height="11" rx="5.500" fill="#f0e094" stroke="#000" stroke-width="1.300"/>
</g>
<!-- row3 stick figure -->
<g fill="none" stroke="#000" stroke-width="1.200" stroke-linecap="round" stroke-linejoin="round">
<path d="M343.300 885v20.500l-6.500 21.500l-4 0.800M343.300 905.500l6.500 21.500l4 0.800"/>
<path d="M343.300 887.500l-14 7l8 2.500M343.300 887.500l10.700 17.500"/>
<ellipse cx="343.300" cy="879.200" rx="4.200" ry="5.700" fill="#dfae86"/>
<path d="M336 896l2.500 -2l1.500 3.300z" fill="#f7941d" stroke-width="0.800"/>
</g>
<!-- mushrooms + hand -->
<g stroke="#000" stroke-width="1.100" stroke-linejoin="round" stroke-linecap="round">
<path d="M441.500 885.500l-0.800 11h7l-0.800 -11z" fill="#f0d9cc"/>
<path d="M435.500 884c0.500 -6 4.500 -10.500 9.500 -10.500c5 0 9 4.500 9.600 10.500c-3 2 -16 2 -19.100 0z" fill="#c8a77d"/>
<path d="M423.500 906.500v-16l8 -2.500c3 -0.500 6 0.800 8 3l6 3.500c3 -0.500 4.500 1 4.300 3c0.500 2 -0.500 3.500 -2 4c-2 1.500 -4.500 1.800 -7 1.300c-5 1 -11 3 -17.300 3.700z" fill="#d9ab86" stroke="none"/><path d="M423.500 890.500l8 -2.500c3 -0.500 6 0.800 8 3l6 3.500c3 -0.500 4.500 1 4.300 3c0.500 2 -0.500 3.500 -2 4c-2 1.500 -4.500 1.800 -7 1.300c-5 1 -11 3 -17.300 3.700" fill="none"/>
<path d="M432 894.500c1.500 -0.500 3 0 3.500 1.500c2 -0.500 4.500 0.500 6.500 0.500M445.500 897c-3 2.500 -8 4 -12 3.500M440 903.500c2.500 -0.500 5 -1 7.500 -2.200" fill="none" stroke-width="0.900"/>
<path d="M447.500 921.500l-0.500 6c1.500 1.500 4 1.500 5.500 0l-0.500 -6z" fill="#f0d9cc"/>
<path d="M444.700 919.500c1 -5.500 4.500 -9.500 8.800 -9.500c2 0 4 1 5 3l-3 8.500c-4 0.800 -8 0.300 -10.800 -2z" fill="#c8a77d"/>
<path d="M464.500 921.500l-0.600 6.500c2 1.800 5.500 1.800 7.500 0l-0.600 -6.500z" fill="#f0d9cc"/>
<path d="M455 919.500c0.800 -8.500 6 -14.800 12.500 -14.800c6.500 0 11.800 6.300 12.500 14.800c-5 3 -20 3 -25 0z" fill="#c8a77d"/>
</g>
<!-- climbing tree -->
<g transform="translate(630 865)" stroke-linejoin="round" stroke-linecap="round">
<path d="M24.200 62.700l5 -6.500c-0.300 -6 -0.300 -14 -1 -20c-0.500 -4 -1.500 -7 -3 -9.600l-9 -6l-5.500 -2l5 -0.500l-3 -3.300l5 2.500l-1.500 -5l4.500 6l4 4l1.500 -4l-3.500 -6l4.500 4l0 -7l2.500 7l1 3l2 -7l0.500 6l3 -6l-0.500 6.500l3.500 -4.500l-1.500 5.500l5.500 -4l-3.500 5.500l4.500 -1.500l-6 4.500c-1.500 2.500 -2 5.500 -2.300 8.500c-0.500 8 0 16 0.500 24.500l3.700 5.400z" fill="#cbb896" stroke="#000" stroke-width="1.100"/>
<path d="M30.300 19.500l-1.500 6l2.300 4l2.400 -7.500z" fill="#fff" stroke="#000" stroke-width="0.900"/>
<path d="M16.500 11l6 8l-2 1.500z" fill="#fff" stroke="#000" stroke-width="0.700"/>
<path d="M30 54c2.500 0.500 5 -0.500 6 -3" fill="none" stroke="#000" stroke-width="1.100"/>
<path d="M10.500 18.200l8.400 2.100M12.600 14.400l7.700 3.100M16.800 10.500l6.300 5.600M21 8l3.500 6M26.600 8.400l0.700 5.600M31.200 10.500l-1.100 4.200M36.400 11.600l-2.100 4.500M40.300 14l-3.900 4.200M43 16.100l-5.200 3.200M14 20.500l5 2M23.500 11l2 5M33.500 9.500l-1 5" fill="none" stroke="#000" stroke-width="1.500" stroke-linecap="round"/>
<g fill="none" stroke="#000" stroke-width="1.100">
<path d="M44.700 34.500l-1 11l-7 1.800l2.700 -6l4.300 4.200M44.700 35l-8 2.200l-4.500 -2.500M36.700 37.200l1.500 3.500l-2 2"/>
<ellipse cx="45.200" cy="31.200" rx="2.700" ry="3.500" fill="#e8a77c"/>
</g>
</g>
</svg>
<!--/DOCSVG-->
<!--PHOTO-->
<svg id="photo" style="left:471px;top:143px;overflow:hidden" width="437.5" height="293.8" viewBox="0 0 437 293" preserveAspectRatio="none">
<defs>
<filter id="b12" x="-30%" y="-30%" width="160%" height="160%"><feGaussianBlur stdDeviation="11"/></filter>
<filter id="b6" x="-30%" y="-30%" width="160%" height="160%"><feGaussianBlur stdDeviation="5"/></filter>
<filter id="b3" x="-30%" y="-30%" width="160%" height="160%"><feGaussianBlur stdDeviation="2.500"/></filter>
<filter id="b1" x="-10%" y="-10%" width="120%" height="120%"><feGaussianBlur stdDeviation="0.600"/></filter>
<filter id="fol" x="0" y="0" width="100%" height="100%" color-interpolation-filters="sRGB">
<feTurbulence type="fractalNoise" baseFrequency="0.26 0.3" numOctaves="3" seed="11" result="n"/>
<feColorMatrix in="n" type="matrix" values="0 0 0 0 0.10  0 0 0 0 0.12  0 0 0 0 0.08  11 0 0 0 -5.1"/>
</filter>
<filter id="fol2" x="0" y="0" width="100%" height="100%" color-interpolation-filters="sRGB">
<feTurbulence type="fractalNoise" baseFrequency="0.04 0.55" numOctaves="2" seed="5" result="n"/>
<feColorMatrix in="n" type="matrix" values="0 0 0 0 0.08  0 0 0 0 0.09  0 0 0 0 0.06  0 9 0 0 -4.7"/>
</filter>
<filter id="gr" x="0" y="0" width="100%" height="100%" color-interpolation-filters="sRGB">
<feTurbulence type="fractalNoise" baseFrequency="0.35 0.5" numOctaves="3" seed="21" result="n"/>
<feColorMatrix in="n" type="matrix" values="0 0 0 0 0.07  0 0 0 0 0.07  0 0 0 0 0.04  6 0 0 0 -2.9"/>
</filter>
<linearGradient id="fadeTop" x1="0" y1="0" x2="0" y2="1"><stop offset="0" stop-color="#fff"/><stop offset="0.560" stop-color="#fff"/><stop offset="0.860" stop-color="#000"/><stop offset="1" stop-color="#000"/></linearGradient>
<mask id="mTop"><rect x="0" y="0" width="437" height="222" fill="url(#fadeTop)"/></mask>
<linearGradient id="fadeBot" x1="0" y1="0" x2="0" y2="1"><stop offset="0" stop-color="#000"/><stop offset="0.250" stop-color="#fff"/><stop offset="1" stop-color="#fff"/></linearGradient>
<mask id="mBot"><rect x="0" y="195" width="437" height="98" fill="url(#fadeBot)"/></mask>
<clipPath id="pc"><rect x="0" y="0" width="437" height="293"/></clipPath>
</defs>
<g clip-path="url(#pc)">
<rect width="437" height="293" fill="#30352a"/>
<!-- soft colour fields -->
<g filter="url(#b12)">
<rect x="-20" y="-20" width="125" height="185" fill="#8fb2d2"/>
<rect x="-20" y="-20" width="45" height="150" fill="#b9d3e8"/>
<rect x="-20" y="60" width="80" height="100" fill="#c5dcee"/>
<rect x="100" y="-20" width="40" height="120" fill="#5d6b66"/>
<rect x="135" y="-20" width="85" height="130" fill="#2a3222"/>
<rect x="150" y="55" width="70" height="90" fill="#6a5a28"/>
<rect x="215" y="-20" width="240" height="170" fill="#272c22"/>
<rect x="222" y="10" width="40" height="130" fill="#8a9086"/>
<rect x="385" y="-10" width="60" height="105" fill="#7f9fc6"/>
<rect x="288" y="78" width="50" height="36" fill="#a3aaa4"/>
<rect x="282" y="6" width="26" height="34" fill="#6f8088"/>
<rect x="-20" y="140" width="130" height="80" fill="#5e5e38"/>
<rect x="100" y="140" width="100" height="75" fill="#76682f"/>
<rect x="92" y="188" width="48" height="28" fill="#a85228"/>
<rect x="-20" y="215" width="160" height="100" fill="#3a4030"/>
<rect x="115" y="238" width="120" height="80" fill="#96622a"/>
<rect x="197" y="150" width="62" height="115" fill="#d2a832"/>
<rect x="218" y="195" width="36" height="55" fill="#f0cf45"/>
<rect x="200" y="116" width="40" height="66" fill="#fffbe0"/>
<rect x="290" y="158" width="160" height="92" fill="#7d6246"/>
<rect x="365" y="192" width="85" height="46" fill="#23241a"/>
<rect x="300" y="252" width="150" height="60" fill="#4c6422"/>
<rect x="225" y="262" width="95" height="50" fill="#66421f"/>
</g>
<!-- foliage masses (dark, with holes) -->
<g mask="url(#mTop)">
<rect x="0" y="0" width="437" height="222" filter="url(#fol)"/>
<rect x="0" y="0" width="437" height="222" filter="url(#fol2)" opacity="0.900"/>
</g>
<!-- ground texture -->
<g mask="url(#mBot)"><rect x="0" y="195" width="437" height="98" filter="url(#gr)" opacity="0.650"/></g>
<!-- golden path details -->
<g filter="url(#b3)">
<path d="M222 224l-46 22l-62 32l-20 15h120l18 -40z" fill="#b07428" opacity="0.800"/>
<path d="M170 244l34 -12l16 -3l-6 10l-46 20z" fill="#dcb83a"/>
<path d="M196 246l-38 47h22l28 -44z" fill="#4c3214"/>
<path d="M214 250l-14 43h13l9 -40z" fill="#5e3c16"/>
<path d="M110 262l60 -14l-8 8l-56 18z" fill="#4a4020" opacity="0.800"/>
<path d="M222 200h30v48l-30 12z" fill="#ecc63a"/>
<circle cx="217" cy="144" r="11" fill="#fffdf0"/>
<path d="M207 150h22l6 56h-30z" fill="#f6e07e" opacity="0.850"/>
<path d="M380 237h57v10h-57z" fill="#b4ac9c" opacity="0.850"/>
<path d="M330 262h107v31h-107z" fill="#52742a" opacity="0.700"/>
</g>
<g fill="none" opacity="0.600"><path d="M312 155Q338 161 355 183M293 170Q332 182 359 230M373 161Q402 168 422 195M305 155Q326 169 340 222M380 190Q417 196 441 220M321 181Q355 194 379 244M386 154Q418 165 438 208M343 159Q371 164 389 183M392 193Q422 200 442 228M390 179Q428 191 454 241M343 171Q375 179 395 212M304 165Q340 170 365 187M290 181Q313 191 328 228M339 167Q381 173 409 197M332 160Q365 167 386 194M326 187Q350 197 365 235M389 155Q406 161 417 186M373 181Q394 188 409 217M305 173Q322 184 332 228M388 198Q423 211 446 266M287 164Q328 176 356 223M332 197Q364 209 385 258M319 160Q346 165 364 186M329 198Q353 202 369 219M290 158Q326 166 350 197M318 155Q360 163 388 196M309 153Q325 159 336 181M363 157Q379 166 390 202M314 200Q332 209 344 246M374 170Q416 179 443 214M313 171Q329 179 339 212M314 194Q351 203 376 239M289 163Q310 169 325 193M312 193Q330 198 343 216M392 178Q433 186 461 218M389 183Q425 194 449 240M342 155Q363 167 376 218M388 196Q413 207 429 249M377 182Q414 191 439 229M360 184Q383 198 397 250M395 154Q436 167 464 222M362 152Q401 158 427 179M396 183Q413 189 424 212M358 178Q393 192 417 245M310 150Q350 154 377 171M386 156Q423 168 447 215" stroke="#a88a66" stroke-width="0.600"/><path d="M419 197l-14 22M389 178l-13 42M359 195l-39 16M377 192l-14 36M310 181l-17 33M292 221l-15 18M370 182l-16 26M324 191l-11 18M307 203l-13 33M354 223l-17 17M420 167l-31 44M352 218l-35 46M316 163l-25 27M370 227l-19 15M336 196l-25 40M361 156l-33 45M342 215l-10 37M389 202l-31 47M359 227l-31 45M406 202l-27 20M403 181l-20 20M302 162l-16 21" stroke="#3a2c1c" stroke-width="0.700"/></g>
<!-- sun glow -->
<radialGradient id="sung" cx="217" cy="145" r="34" gradientUnits="userSpaceOnUse"><stop offset="0" stop-color="#fffef4" stop-opacity="1"/><stop offset="0.300" stop-color="#fff6cc" stop-opacity="0.900"/><stop offset="0.650" stop-color="#f2d878" stop-opacity="0.400"/><stop offset="1" stop-color="#e8c050" stop-opacity="0"/></radialGradient>
<circle cx="217" cy="145" r="34" fill="url(#sung)"/>
<!-- trunks -->
<g filter="url(#b1)">
<path d="M64 0h8l-20 147l-6 91h-15l7 -91z" fill="#1a1812"/>
<path d="M104.500 0h4l-11 147l-4 88h-9.500l5 -88z" fill="#221f17"/>
<path d="M21 30h3.500l-11 117l-6 70h-6l6 -70z" fill="#26251c"/>
<path d="M34.500 30h3l-5 117l-10 68h-5l8 -68z" fill="#26251c"/>
<path d="M6 60h2l-3 140h-3z" fill="#2a2a20"/>
<path d="M53 147h5l-3 68h-5z" fill="#332e20"/>
<path d="M61 140h3l-2 75h-3z" fill="#332e20"/>
<path d="M70 120h4l-3 95h-3z" fill="#322b1c"/>
<path d="M83 100h2l-1 110h-2z" fill="#322b1c"/>
<path d="M106 147h4l-2 65h-3z" fill="#54301c"/>
<path d="M123 130h6l-1 90h-6z" fill="#44341f"/>
<path d="M133 120h3.500l-0.500 95h-3z" fill="#3a2f20"/>
<path d="M142 100h7l1 127h-9z" fill="#37281b"/>
<path d="M160 110h3l0 100h-3z" fill="#3a3020"/>
<path d="M172 120h2.500l0 92h-2.500z" fill="#40321f"/>
<path d="M196.500 0h6l1.500 237h-9z" fill="#261f16"/>
<path d="M214.500 10h3l0.500 232h-4.500z" fill="#482c16"/>
<path d="M236.500 150h5v95h-5z" fill="#4c3016"/>
<path d="M263 0h17l6 147l7.500 61l10.500 61l12 14h-56l8 -14l5 -61l-7 -61z" fill="#201a13"/>
<path d="M281 150l4 0l8 58l9 55l-8 0l-7 -55z" fill="#5a3420" opacity="0.800"/>
<path d="M268 100l6 0l2 110l-6 0z" fill="#33261a" opacity="0.800"/>
<path d="M336 50h4l11 97l5 40h-6l-5 -40z" fill="#4a2a18"/>
<path d="M359 140h10l2 36h-10z" fill="#54301a" opacity="0.800"/>
</g>
<!-- branches -->
<g stroke="#14130e" stroke-width="1.100" fill="none" opacity="0.900">
<path d="M272 30l-52 -14M272 48l-52 6M272 62l-52 22M272 78l-50 2M272 95l-52 14M272 112l-50 4M272 128l-52 10M272 142l-50 -2"/>
<path d="M275 32l150 -14M275 50l120 0M275 66l160 -6M275 82l110 10M275 98l160 -10M275 112l90 -20l60 -50M275 126l160 -4M285 140l100 -12l50 -30M282 150l155 2M285 163l80 6"/>
<path d="M199 60l-28 8M199 80l-30 -4M199 100l-32 10M199 120l-30 4M199 135l-26 8M199 70l18 -6M199 95l20 4"/>
<path d="M240 160l-20 3M240 175l-20 -2M240 190l-20 6M240 205l-20 2M240 170l24 -2M240 188l24 4M240 205l24 0"/>
<path d="M68 30l-60 -12M66 45l-50 16M70 20l40 -10M105 40l30 -12M105 60l-30 -8M60 80l-50 10"/>
</g>
<g stroke="#8a7052" stroke-width="0.700" fill="none" opacity="0.750">
<path d="M300 180l40 30l30 36M310 172l50 20l40 44M330 170l50 34l30 40M290 200l36 22l20 28M350 168l50 40l20 30M296 228l40 16M320 165l60 30l40 50M340 175l40 50M360 180l50 60"/>
<path d="M292 170l-30 40M296 190l-34 50M300 205l-30 50"/>
</g>
</g>
</svg>
<!--/PHOTO-->
<div class="abs" id="sb"></div>
<!--SB-->
<div class="abs" style="left:1196px;top:114px;width:19px;height:14px;background:#f0f0f0;border-right:1px solid #8c8c8c;border-bottom:1px solid #a8a8a8;border-left:1px solid #fbfbfb"></div>
<div class="abs" style="left:1196px;top:128px;width:19px;height:389px;background:#f0f0f0;border-right:1px solid #8c8c8c;border-bottom:1px solid #8c8c8c;border-left:1px solid #fbfbfb;border-top:1px solid #fbfbfb"></div>
<div class="abs" style="left:1196px;top:517px;width:19px;height:473px;background:#f8f8f8"></div>
<div class="abs" style="left:1196px;top:990px;width:19px;height:10px;background:#f0f0f0;border-right:1px solid #8c8c8c;border-left:1px solid #fbfbfb;border-top:1px solid #fbfbfb"></div>
<svg style="left:1196px;top:114px" width="18" height="886" viewBox="0 0 18 886">
<path d="M5.500 9l3.500 -3.800l3.500 3.800z" fill="#222"/>
<path d="M5.500 881l3.500 3.800l3.500 -3.800z" fill="#222"/>
</svg>
<!--/SB-->
<div class="abs" id="panel"></div>
<!--PANEL-->
<div class="abs" style="left:1221px;top:114px;width:2px;height:886px;background:#f8f8f8"></div>
<div class="abs" style="left:1223px;top:115px;width:138px;height:24px;background:#f9f9f9;border-left:1px solid #e2e2e2;border-right:1px solid #e2e2e2"></div>
<div class="abs" id="ptab" style="left:1235px;top:119px;font-size:13px;line-height:16px;white-space:nowrap;letter-spacing:-0.200px">Symboler och Bilder</div>
<div class="hdr" style="left:1224px;top:140px;width:302px;height:28px"><span id="hsym" style="position:relative;top:2px">Symboler</span></div>
<div class="abs" style="left:1380px;top:173px;width:80px;height:43px;background:#fdfdfd;border:1px solid #dcdcdc;border-bottom:2px solid #cacaca;border-radius:6px"></div>
<div class="abs" id="pl" style="left:1428px;top:187px;font-size:13px;line-height:16px;white-space:nowrap">Placera</div>
<div class="abs" style="left:1235px;top:222px;width:230px;height:321px;background:#fff;border:2px solid #8e8e8e;border-bottom-width:1px;border-top-color:#7a7a7a"></div>
<div class="abs" style="left:1237px;top:224px;width:210px;height:26px;background:#e1e1e1"></div>
<div class="abs" id="kl" style="left:1241px;top:229px;font-size:16.500px;line-height:19px;white-space:nowrap;letter-spacing:0.12px">klättrade i träd</div>
<div class="abs" style="left:1237px;top:433px;width:210px;height:26px;background:#e1e1e1"></div>
<div class="abs" id="trad" style="left:1241px;top:438px;font-size:16.500px;line-height:19px;white-space:nowrap;letter-spacing:0.7px">träd</div>
<div class="abs" style="left:1401.500px;top:249px;width:60px;height:82.500px;border:4px solid #0870d8;border-radius:2px;background:#fff"></div>
<div class="btn" style="left:1241px;top:554px;width:88px;height:25px;line-height:23px"><span id="hitta" style="font-size:13.500px;letter-spacing:-0.150px">Hitta symbol</span></div>
<div class="abs" style="left:1338px;top:555px;width:120px;height:23px;background:#fff;border-bottom:1px solid #777"></div>
<div class="hdr" style="left:1224px;top:595px;width:302px;height:27px;letter-spacing:0"><span id="hbil" style="position:relative;top:1px">Bilder</span></div>
<div class="abs" style="left:1236px;top:628px;width:46px;height:45px;background:#fff;border:1px solid #e4e4e4;border-radius:5px"></div>
<div class="abs" style="left:1235px;top:682px;width:230px;height:217px;background:#fff;border:1px solid #8a919b"></div>
<div class="lbl" id="l1" style="left:1233px;top:744px;width:82px">Allmänna</div>
<div class="lbl" id="l2" style="left:1304px;top:744px;width:82px">Böcker</div>
<div class="lbl" id="l3" style="left:1374px;top:744px;width:82px">Djur</div>
<div class="lbl" id="l4" style="left:1234px;top:840px;width:82px">Flaggor</div>
<div class="lbl" id="l5" style="left:1304px;top:840px;width:82px">Fordon</div>
<div class="lbl" id="l6" style="left:1384px;top:840px;text-align:left">Fotograf.</div>
<div class="btn" style="left:1236px;top:908px;width:278px;height:25px;line-height:23px"><span id="b1">Mina bilder</span></div>
<div class="btn" style="left:1236px;top:939px;width:278px;height:25px;line-height:23px"><span id="b2">Delade bilder</span></div>
<div class="btn" style="left:1236px;top:971px;width:278px;height:25px;line-height:23px"><span id="b3">Widgit bilder</span></div>
<!--/PANEL-->
<!--PANELSVG-->
<svg id="panelsvg" style="left:1216px;top:114px;overflow:hidden" width="224" height="886" viewBox="1216 114 224 886">
<defs>
<g id="climbtree" stroke-linejoin="round" stroke-linecap="round">
<path d="M24.200 62.700l5 -6.500c-0.300 -6 -0.300 -14 -1 -20c-0.500 -4 -1.500 -7 -3 -9.600l-9 -6l-5.500 -2l5 -0.500l-3 -3.300l5 2.500l-1.500 -5l4.500 6l4 4l1.500 -4l-3.500 -6l4.500 4l0 -7l2.500 7l1 3l2 -7l0.500 6l3 -6l-0.500 6.500l3.500 -4.500l-1.500 5.500l5.500 -4l-3.500 5.500l4.500 -1.500l-6 4.500c-1.500 2.500 -2 5.500 -2.300 8.500c-0.500 8 0 16 0.500 24.500l3.700 5.400z" fill="#cbb896" stroke="#000" stroke-width="1.100"/>
<path d="M30.300 19.500l-1.500 6l2.300 4l2.400 -7.500z" fill="#fff" stroke="#000" stroke-width="0.900"/>
<path d="M16.500 11l6 8l-2 1.500z" fill="#fff" stroke="#000" stroke-width="0.700"/>
<path d="M30 54c2.500 0.500 5 -0.500 6 -3" fill="none" stroke="#000" stroke-width="1.100"/>
<path d="M10.500 18.200l8.400 2.100M12.600 14.400l7.700 3.100M16.800 10.500l6.300 5.600M21 8l3.500 6M26.600 8.400l0.700 5.600M31.200 10.500l-1.100 4.200M36.400 11.600l-2.100 4.500M40.300 14l-3.900 4.200M43 16.100l-5.200 3.200M14 20.500l5 2M23.500 11l2 5M33.500 9.500l-1 5" fill="none" stroke="#000" stroke-width="1.500" stroke-linecap="round"/>
<g fill="none" stroke="#000" stroke-width="1.100">
<path d="M44.700 34.500l-1 11l-7 1.800l2.700 -6l4.300 4.200M44.700 35l-8 2.200l-4.500 -2.500M36.700 37.200l1.500 3.500l-2 2"/>
<ellipse cx="45.200" cy="31.200" rx="2.700" ry="3.500" fill="#e8a77c"/>
</g>
</g>
<g id="folder">
<path d="M0.600 2.200a1.600 1.600 0 0 1 1.600 -1.600h8.200a1.600 1.600 0 0 1 1.500 1l1.200 4.300h34.100a1.200 1.200 0 0 1 1.200 1.200v41a1.200 1.200 0 0 1 -1.200 1.200h-45.400a1.200 1.200 0 0 1 -1.200 -1.200z" fill="#f8e196" stroke="#4a4436" stroke-width="1.200"/>
</g>
</defs>
<!-- hand on Placera button -->
<g stroke-linejoin="round" stroke-linecap="round">
<path d="M1389 184.650c5.500 -1.300 10.500 -2.700 15.850 -4.150c1.400 0.200 2.500 0.700 3.650 1.400c2.700 1.300 5.200 2.700 7.400 4.400c1.700 1.600 2.900 3.400 3.700 5.500c0.700 1.900 0.900 3.900 0.900 6c-0.100 2.600 -0.900 5 -2.100 7.100l-1.600 -1.600l-5.050 -3.700l-2.250 -6.900l-4.650 -5.050c-1.900 0.800 -3.300 2.300 -4.150 4.150c-0.300 1.500 0.300 2.900 1.400 4.100l7.350 6.900c0.200 1 -0.700 1.800 -1.850 1.900c-2.700 -1.900 -5.500 -3.700 -8.300 -5.100c-2 -1 -4 -1.900 -6 -2.750c-1.400 -0.300 -2.900 -0.450 -4.300 -0.450z" fill="#fce4d9" stroke="none"/>
<path d="M1404.850 187.650l7.350 3.250l4.600 5.500v6.900l-5.050 -3.700l-2.250 -6.900z" fill="#a67c68" stroke="#6e5548" stroke-width="0.500"/>
<path d="M1389 184.650c5.500 -1.300 10.500 -2.700 15.850 -4.150c1.400 0.200 2.500 0.700 3.650 1.400c2.700 1.300 5.200 2.700 7.400 4.400c1.700 1.600 2.900 3.400 3.700 5.500c0.700 1.900 0.900 3.900 0.900 6c-0.100 2.600 -0.900 5 -2.100 7.100l-1.600 -1.600M1404.850 187.650c-1.900 0.800 -3.300 2.300 -4.150 4.150c-0.300 1.500 0.300 2.900 1.400 4.100l7.350 6.900c0.200 1 -0.700 1.800 -1.850 1.900c-2.700 -1.900 -5.500 -3.700 -8.300 -5.100c-2 -1 -4 -1.900 -6 -2.750c-1.400 -0.300 -2.900 -0.450 -4.300 -0.450" fill="none" stroke="#8a7f78" stroke-width="0.900"/>
</g>
<!-- arrows -->
<path d="M1256 260.200h53" stroke="#000" stroke-width="3" stroke-linecap="round"/><path d="M1248.600 260.200l11.500 -5.800v11.600z" fill="#000"/>
<path d="M1338.500 260.200h52.300" stroke="#000" stroke-width="3" stroke-linecap="round"/><path d="M1331 260.200l11.500 -5.800v11.600z" fill="#000"/>
<use href="#climbtree" transform="translate(1245.800 259.500) scale(1.066)"/>
<!-- palm with climber -->
<g stroke-linejoin="round" stroke-linecap="round">
<path d="M1350 324.500c-1 -20 2 -40 9 -53l4 1.500c-6 14 -8 32 -5.500 51.500z" fill="#d9a56a" stroke="#000" stroke-width="1.200"/>
<path d="M1351 310l5.500 -0.500M1351 298l5.500 -0.300M1352.500 287l5.300 0.800M1355 278l5 1.700" stroke="#000" stroke-width="0.800" fill="none"/>
<path d="M1361 271c-4 -1.500 -9 -1 -12 0.500c0.500 4 1.500 8 3.500 11c1 -5 4 -9 8.500 -11.500z" fill="#0fdc0f" stroke="#000" stroke-width="1.100"/>
<path d="M1362 271c2 -1 4 -1 6 -0.500c0 5 -1.500 9 -4.500 12.500c0.500 -4.500 0 -8.500 -1.500 -12z" fill="#0fdc0f" stroke="#000" stroke-width="1.100"/>
<path d="M1368 270.500c4 -0.500 8 -0.300 11.500 0.500c0.500 7 -1.500 13.500 -6 18.500c0 -6.500 -2 -13 -5.500 -19z" fill="#0fdc0f" stroke="#000" stroke-width="1.100"/>
<g fill="none" stroke="#000" stroke-width="1.200">
<path d="M1343.800 292.200l-4.500 15.500l7 -1.500l4.500 2M1343.800 293l6.500 7.500l3.500 -1"/>
<ellipse cx="1344.700" cy="288.500" rx="2.800" ry="3.500" fill="#f3d9c8"/>
</g>
</g>
<!-- selected big tree (clipped by viewport) -->
<use href="#climbtree" transform="translate(1402.600 243.100) scale(1.300)"/>
<!-- no symbol -->
<rect x="1248.500" y="345" width="29" height="30" fill="#c4f0c0" stroke="#9a9a9a" stroke-width="0.800"/>
<rect x="1281.300" y="351.500" width="29" height="30" fill="#ffbaba" stroke="#9a9a9a" stroke-width="0.800"/>
<rect x="1255" y="375" width="28.600" height="25.700" fill="#ffffc2" stroke="#9a9a9a" stroke-width="0.800"/>
<path d="M1243.500 337.800l69 68.500" stroke="#e8000e" stroke-width="4.200" stroke-linecap="round"/>
<!-- round tree -->
<g stroke-linejoin="round" stroke-linecap="round">
<path d="M1305.9 491.3Q1310.3 497.8 1300.8 499.9Q1301.2 507.1 1291.3 506.2Q1287.6 512.9 1279.0 509.2Q1271.9 514.2 1266.2 508.3Q1256.8 510.8 1255.0 503.7Q1245.0 503.2 1247.3 496.1Q1238.5 492.8 1244.5 487.0Q1238.3 481.3 1247.1 477.8Q1244.6 470.8 1254.5 470.2Q1256.2 463.1 1265.6 465.5Q1271.2 459.4 1278.4 464.4Q1286.9 460.5 1290.7 467.2Q1300.6 466.2 1300.4 473.4Q1310.0 475.4 1305.8 481.9Q1313.4 486.5 1305.9 491.3z" fill="#5fce35" stroke="#000" stroke-width="1.400"/>
<path d="M1266.800 533.500c4 -2 6.500 -4 7.500 -6.500c0.500 -8 -0.500 -16 -2.500 -21l-6.500 -8.500l3.500 -2l6 6.500c1 -5 2.500 -9 5 -12.500l5.500 2.500c-2.500 5 -3.500 11.500 -3.500 17.500c0 7 1 13 3 18.500l6 6z" fill="#c89b5f" stroke="#000" stroke-width="1.300"/>
<path d="M1262 496.500c-3 1.500 -6.500 0.500 -8 -2M1266 502.500c-2 2 -5 2.500 -7.500 1.500M1287 498c2.500 1.500 5.500 1 7.500 -1M1292.500 488c2 0 4 -1 5 -3M1290 478.500c2 -0.500 3.500 -2 4 -4M1284.500 484l1.500 -3l1.200 2.500l1.800 -2.500M1286 504c2.500 1.500 5.500 1.500 8 0" fill="none" stroke="#000" stroke-width="1"/>
</g>
<!-- pine -->
<g stroke-linejoin="round">
<rect x="1357.400" y="520" width="7" height="15" fill="#8b4a0b" stroke="#000" stroke-width="1.300"/>
<path d="M1360 462.800c3.500 7 8.500 13.500 14.400 19.100c-2 1.200 -4 2 -6.200 2.600c2.500 6 6 11.500 9.700 16.600c-2 1.200 -4 2 -6.200 2.600c2.800 6.500 6.800 12.500 11.400 17.600c-5 2.500 -9 2 -13 0.300c-3.500 1.500 -7 1.500 -10.100 0c-3.100 1.500 -6.600 1.500 -10.100 0c-4 1.700 -8 2.200 -13.200 -0.300c4.600 -5.100 8.600 -11.100 11.400 -17.600c-2.200 -0.600 -4.200 -1.400 -6.200 -2.600c3.700 -5.100 7.200 -10.600 9.700 -16.600c-2.200 -0.600 -4.200 -1.400 -6.200 -2.600c5.900 -5.600 10.900 -12.100 14.600 -19.100z" fill="#0b8a0b" stroke="#000" stroke-width="1.400"/>
</g>
<!-- small pine + partial round tree -->
<g stroke-linejoin="round">
<path d="M1432.500 504c2 -6 2.500 -12 1.500 -17.500l3.500 -4l5 2v19.500z" fill="#c89b5f" stroke="#000" stroke-width="1.200"/>
<path d="M1463.0 481.5Q1464.7 486.8 1456.2 487.8Q1453.0 492.8 1444.8 490.9Q1437.7 494.0 1432.6 489.7Q1423.8 490.0 1423.3 484.6Q1415.7 482.0 1420.0 477.3Q1415.9 472.6 1423.7 470.0Q1424.4 464.7 1433.1 465.1Q1438.5 460.9 1445.4 464.2Q1453.7 462.4 1456.6 467.4Q1465.2 468.7 1463.2 473.9Q1469.3 477.7 1463.0 481.5z" fill="#5fce35" stroke="#000" stroke-width="1.300"/>
<path d="M1433.500 487c1 -2 2.500 -3.500 4.500 -4.500l3 1.500v6z" fill="#c89b5f"/>
<path d="M1434 486.500l3.500 -4" fill="none" stroke="#000" stroke-width="1.200"/>
<rect x="1418.500" y="524" width="4" height="8" fill="#8b4a0b" stroke="#000" stroke-width="1.100"/>
<path d="M1420.400 492.400c2 3.500 5 7 8.200 9.600c-1 0.600 -2 1 -2.900 1.200c1.200 3.300 2.800 6.300 4.700 9.300c-1.200 0.600 -2.300 1 -3.500 1.200c1.800 4.200 4.200 8.300 7 11.900c-3 1.300 -5.500 1 -7.500 0c-2 0.800 -4 0.800 -6 0c-2 0.800 -4 0.800 -6 0c-2 1 -4.500 1.300 -7.600 -0.800c2.800 -3.600 5.200 -7 7 -11.100c-1.200 -0.200 -2.300 -0.600 -3.500 -1.200c1.900 -3 3.500 -6 4.700 -9.300c-0.900 -0.200 -1.900 -0.600 -2.900 -1.200c3.200 -2.600 6.200 -6.100 8.300 -9.600z" fill="#0b8a0b" stroke="#000" stroke-width="1.200"/>
</g>
<!-- up-folder button -->
<path d="M1237.600 633.500a1.500 1.500 0 0 1 1.500 -1.500h11.500a1.500 1.500 0 0 1 1.400 1l1.200 3.300h25.500a1.500 1.500 0 0 1 1.500 1.500v27.200a1.500 1.500 0 0 1 -1.500 1.500h-39.600a1.500 1.500 0 0 1 -1.500 -1.500z" fill="#f8e196" stroke="#3c382c" stroke-width="1.200"/>
<path d="M1248.300 647v11.800h24.800" fill="none" stroke="#000" stroke-width="3" stroke-linecap="round" stroke-linejoin="miter"/>
<path d="M1242.800 649.800l5.500 -10.600l5.500 10.600z" fill="#000"/>
<!-- folders row1 -->
<use href="#folder" x="1249" y="691"/>
<use href="#folder" x="1319" y="691"/>
<use href="#folder" x="1389" y="691"/>
<!-- folder 1 content: face + thought -->
<g stroke="#4a4038" stroke-width="0.700">
<ellipse cx="1264.300" cy="723" rx="9.200" ry="11.300" fill="#f6e2da" transform="rotate(-12 1264.300 723)"/>
<circle cx="1281.500" cy="711.500" r="8" fill="#fbf6ee"/>
<circle cx="1275" cy="718" r="3.200" fill="#fbf6ee"/><circle cx="1288" cy="716" r="3.200" fill="#fbf6ee"/><circle cx="1276" cy="706.500" r="3.200" fill="#fbf6ee"/><circle cx="1287" cy="706" r="3.200" fill="#fbf6ee"/>
<circle cx="1281.500" cy="711.500" r="7" fill="#fbf6ee" stroke="none"/>
<circle cx="1281.500" cy="709.800" r="3.400" fill="#fff3c4" stroke="#a08040"/>
<rect x="1280" y="713" width="3" height="3" fill="#e09a30" stroke="#805020" stroke-width="0.500"/>
<circle cx="1273" cy="714.500" r="1.200" fill="#bbb"/><circle cx="1270.300" cy="716.800" r="0.800" fill="#bbb"/>
</g>
<path d="M1259.500 720.500l2.200 -0.600M1266 719l2.200 -0.600" stroke="#000" stroke-width="1.300"/>
<path d="M1259.500 727.500c2.500 2.500 7 2 9.500 -1.500c-0.500 4 -2.500 6.500 -5.500 6.500c-2.500 0 -3.800 -2.500 -4 -5z" fill="#fff" stroke="#3a2a24" stroke-width="0.800"/>
<path d="M1264 720.500l-0.800 3.500l1.800 0.300" fill="none" stroke="#7a5a50" stroke-width="0.600"/>
<!-- folder 2 content: book -->
<path d="M1324.800 704.500l18.700 -1.200l19 1.200v31.300h-37.700z" fill="#8b2a1a" stroke="#3a120a" stroke-width="0.800"/>
<path d="M1326.500 705c5.500 -1.500 11.500 -1.500 17 0.800v28.400c-5.500 -2 -11.500 -2 -17 -0.500z" fill="#fdfdfd" stroke="#555" stroke-width="0.600"/>
<path d="M1343.500 705.800c5.500 -2.300 11.500 -2.300 17.200 -0.800v28.700c-5.700 -1.500 -11.700 -1.500 -17.200 0.500z" fill="#fdfdfd" stroke="#555" stroke-width="0.600"/>
<rect x="1329" y="707.500" width="11.500" height="9.500" fill="#3c9a3c"/><rect x="1329" y="713.500" width="11.500" height="3.500" fill="#c23a2a"/><path d="M1331 707.500v6M1335 707.500v6M1338.500 707.500v6" stroke="#1a4a1a" stroke-width="1.400"/>
<path d="M1329 720.500h11.500M1329 723.500h11.500M1329 726.500h11.500M1329 729.500h11.500M1346.500 709.500h12M1346.500 713h12M1346.500 716.500h12M1346.500 720h12M1346.500 723.500h12M1346.500 727h12M1346.500 730.500h12" stroke="#bdbdbd" stroke-width="0.800"/>
<!-- folder 3 content: animals -->
<g stroke="#3a3a3a" stroke-width="0.700" stroke-linejoin="round">
<path d="M1395 722c-2 -6 0 -11.500 6 -13.500c6 -2 13 -0.500 16.500 4c2 3 2 7 0.500 10.500c-1 1.500 -2.500 1.500 -3.500 0.500l-1 3.500h-4l-0.500 -3.500c-2 0.500 -4.500 0.500 -6.500 0l-0.500 3.500h-4l-0.500 -4.500c-1 2 -1.500 3 -2.500 4.500z" fill="#9a9a9a"/>
<path d="M1408 712c3 -2 7 -1 8 2.500c0.500 3 -1 6 -4 6.500c-3 0 -5 -3 -4 -9z" fill="#b5b5b5"/>
<path d="M1414 722.500l2 2.500l1.500 -2" fill="#e8d8a0"/>
<path d="M1418 703.500c2 -2.500 6 -3 9 -1.500l7 3l-5.500 2.500c-2.500 2 -6 2 -8.500 0.500z" fill="#b5795a"/>
<path d="M1424 708v3.500M1427 708v3.500" stroke="#5a3a1a" stroke-width="0.800"/><path d="M1420 712.200h12" stroke="#c04a1a" stroke-width="1.400"/>
<ellipse cx="1426" cy="728.500" rx="6" ry="5.500" fill="#d9904a"/>
<path d="M1423 721.500l0.500 -3l2 2h1.500l2 -2l0.500 3c0.500 2 -0.500 3.500 -3.300 3.500c-2.700 0 -3.700 -1.500 -3.200 -3.500z" fill="#d9904a"/>
<path d="M1420 730c-2 1 -2.500 3 -1 4" fill="none" stroke="#5a3a1a"/>
</g>
<!-- folders row2 -->
<use href="#folder" x="1249.500" y="787"/>
<use href="#folder" x="1319.500" y="787"/>
<use href="#folder" x="1389.500" y="787"/>
<!-- flag -->
<g>
<path d="M1253.500 822l21.500 -26" stroke="#5a3a1a" stroke-width="2.200"/><path d="M1253.500 822l21.500 -26" stroke="#d9a56a" stroke-width="1"/>
<g transform="translate(1275.800 796.500) rotate(38)"><rect x="0" y="0" width="24.500" height="19.600" fill="#fff" stroke="#000" stroke-width="0.800"/><rect x="0.0" y="0.0" width="4.9" height="4.9" fill="#000"/><rect x="9.8" y="0.0" width="4.9" height="4.9" fill="#000"/><rect x="19.6" y="0.0" width="4.9" height="4.9" fill="#000"/><rect x="4.9" y="4.9" width="4.9" height="4.9" fill="#000"/><rect x="14.7" y="4.9" width="4.9" height="4.9" fill="#000"/><rect x="0.0" y="9.8" width="4.9" height="4.9" fill="#000"/><rect x="9.8" y="9.8" width="4.9" height="4.9" fill="#000"/><rect x="19.6" y="9.8" width="4.9" height="4.9" fill="#000"/><rect x="4.9" y="14.7" width="4.9" height="4.9" fill="#000"/><rect x="14.7" y="14.7" width="4.9" height="4.9" fill="#000"/></g>
</g>
<!-- vehicles -->
<g stroke="#333" stroke-width="0.600" stroke-linejoin="round">
<path d="M1325.500 803l17 -6c2 -0.700 4 -0.500 5 0.500l-3 2l-7 3l-5 6l-2 0.500l2 -5l-5 1.500z" fill="#b4bcc8"/>
<path d="M1333 797l3 -0.300l4 2.500" fill="none" stroke-width="0.900"/>
<path d="M1349 801l-6.500 12h6.500z" fill="#e01a1a"/><path d="M1349.500 801l7.500 12h-7.500z" fill="#f4e800"/>
<path d="M1342 814h16l-1.500 3.500h-13z" fill="#c8c8c8"/><path d="M1341.500 818.500c2 -1 4 1 6 0c2 -1 4 1 6 0c2 -1 4 1 5.500 0" fill="none" stroke="#3a6ab0" stroke-width="0.900"/>
<path d="M1325 829.500c0 -3 1 -5 3 -6l3 -3.500c1 -1 2.500 -1.500 4.500 -1.500h7.500c2 0 3.500 1 4.500 2.500l3 3.500c2 0.500 2.500 2 2.500 3.500v1.500z" fill="#e01a1a"/>
<path d="M1332 824l2 -3.500h4v3.500zM1339.500 820.500h3.500l3 3.500h-6.500z" fill="#f2b0b0" stroke-width="0.400"/>
<circle cx="1331" cy="830.500" r="2.600" fill="#fff" stroke="#000" stroke-width="1.300"/><circle cx="1347" cy="830.500" r="2.600" fill="#fff" stroke="#000" stroke-width="1.300"/>
</g>
<!-- camera -->
<g stroke="#1a1a1a" stroke-width="0.900" stroke-linejoin="round">
<path d="M1396 808c0 -3 2 -5 5 -5.500l6 -1l2.500 -3.500l12 -2l3 2.500l5.500 -1c2 0 3.500 1.500 3.500 3.500l0.500 19c0 2.500 -1.500 4 -4 4.500l-27 6.500c-3 0 -5 -1.500 -5.500 -4.500z" fill="#6e6e6e"/>
<path d="M1397 810c6 -2 10 -2.500 16 -1l0.500 18c-4 1.500 -9 2.500 -14 3.500z" fill="#5a5a5a" stroke-width="0.600"/>
<circle cx="1422" cy="815" r="8.200" fill="#555"/><circle cx="1423" cy="815" r="6" fill="#888"/><ellipse cx="1423.500" cy="815" rx="3.300" ry="4.300" fill="#d8c8cc"/>
<rect x="1403" y="812.500" width="4" height="2.500" fill="#ccc" stroke-width="0.400"/>
</g>
<!-- folders row 3 (clipped) -->
<g clip-path="url(#clipimg)">
<use href="#folder" x="1249.500" y="882.500"/>
<use href="#folder" x="1319.500" y="882.500"/>
<use href="#folder" x="1389.500" y="882.500"/>
<path d="M1255 898.500c0 -4 3 -6 6 -5.500c2 0 3.500 1.500 4 3.500v3h-10z" fill="#f01010"/>
<circle cx="1344" cy="907" r="14" fill="#f6dcb8" stroke="#6a50c0" stroke-width="0.700"/>
<path d="M1340.500 897.500l3.500 -2.500l3.500 2.500" fill="#d9904a"/>
<path d="M1398 895.500h1.500M1400.500 895.500h1.500M1403 895.500h1.500M1411 895.500h1.500M1413.500 895.500h1.500M1416 895.500h1.500" stroke="#555" stroke-width="2.400"/>
</g>
<defs><clipPath id="clipimg"><rect x="1236" y="683" width="204" height="215"/></clipPath></defs>
</svg>
<!--/PANELSVG-->
</div>
</body>
</html>
